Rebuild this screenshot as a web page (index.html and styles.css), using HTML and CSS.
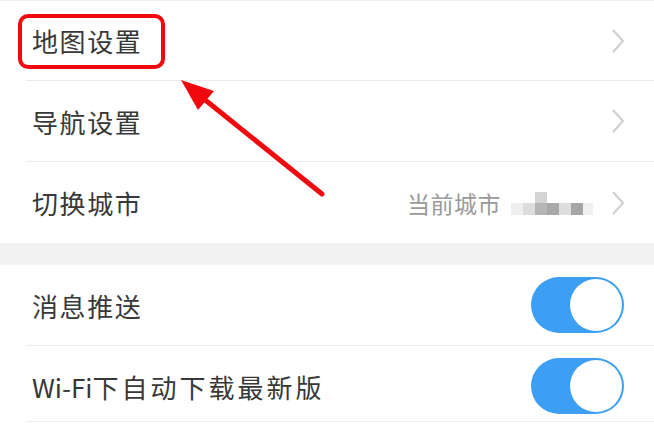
FILE: index.html
```html
<!DOCTYPE html>
<html lang="zh-CN">
<head>
    <meta charset="UTF-8">
    <meta name="viewport" content="width=device-width, initial-scale=1.0">
    <title>设置</title>
    <link rel="stylesheet" href="styles.css">
</head>
<body>
    <div class="page">
        <ul class="group first">
            <li class="row">
                <span class="label">地图设置</span>
                <svg class="chevron" viewBox="0 0 12 24" width="12" height="24"><polyline points="1,1 11,12 1,23"/></svg>
            </li>
            <li class="row">
                <span class="label">导航设置</span>
                <svg class="chevron" viewBox="0 0 12 24" width="12" height="24"><polyline points="1,1 11,12 1,23"/></svg>
            </li>
            <li class="row last">
                <span class="label">切换城市</span>
                <span class="city">当前城市</span>
                <span class="mosaic">
                    <i></i><i></i><i></i><i></i><i></i><i></i><i></i>
                </span>
                <svg class="chevron" viewBox="0 0 12 24" width="12" height="24"><polyline points="1,1 11,12 1,23"/></svg>
            </li>
        </ul>
        <div class="gap"></div>
        <ul class="group">
            <li class="row">
                <span class="label">消息推送</span>
                <span class="switch on"><span class="knob"></span></span>
            </li>
            <li class="row bottom">
                <span class="label wide"><span class="latin">Wi-Fi</span>下自动下载最新版</span>
                <span class="switch on"><span class="knob"></span></span>
            </li>
        </ul>

        <!-- 标注 -->
        <div class="mark"></div>
        <svg class="arrow" width="654" height="425" viewBox="0 0 654 425">
            <line x1="322" y1="194" x2="204" y2="99"/>
            <polygon points="181,80 214,91 198,110"/>
        </svg>
    </div>
</body>
</html>
```

FILE: styles.css
```css
*{
    box-sizing: border-box;
}
body{
    margin: 0;
    background-color: #fff;
    font-family: "Noto Sans CJK SC", "Noto Sans", sans-serif;
    color: #333;
}
.page{
    width: 654px;
    height: 425px;
    position: relative;
    overflow: hidden;
}
.group{
    list-style: none;
    margin: 0;
    padding: 0;
}
.group.first{
    border-top: 1px solid #f0f0f0;
}
.row{
    display: flex;
    align-items: center;
    height: 81px;
    margin-left: 26px;
    padding: 0 30px 0 6px;
    border-bottom: 1px solid #ececec;
}
.group.first .row:first-child{
    height: 80px;
}
.row.last{
    border-bottom: none;
}
.row.bottom{
    height: 76px;
    padding-top: 5px;
}
.label{
    flex: 1;
    font-size: 26px;
    letter-spacing: 1.6px;
    color: #383838;
}
.label.wide{
    letter-spacing: 3px;
}
.label .latin{
    letter-spacing: 0;
}
.chevron{
    display: block;
    margin-left: 19px;
}
.chevron polyline{
    fill: none;
    stroke: #cfcfcf;
    stroke-width: 2;
}
.city{
    font-size: 23px;
    color: #9a9a9a;
    letter-spacing: 0.5px;
}
.mosaic{
    display: flex;
    align-items: flex-end;
    height: 24px;
    margin-left: 10px;
}
.mosaic i{
    display: block;
    width: 12px;
    height: 12px;
    background-color: #eee;
}
.mosaic i:nth-child(2){
    background-color: #dcdcdc;
}
.mosaic i:nth-child(3){
    height: 23px;
    background: linear-gradient(#d4d4d4 50%, #b5b5b5 50%);
}
.mosaic i:nth-child(4){
    background-color: #a9a9a9;
}
.mosaic i:nth-child(5){
    background-color: #dedede;
}
.mosaic i:nth-child(6){
    background-color: #a6a6a6;
}
.mosaic i:nth-child(7){
    width: 10px;
    background-color: #f0f0f0;
}
.gap{
    height: 22px;
    background-color: #f2f2f2;
    border-bottom: 1px solid #f6f6f6;
}
.switch{
    display: flex;
    align-items: center;
    justify-content: flex-end;
    width: 93px;
    height: 56px;
    padding: 2px;
    border-radius: 28px;
    background-color: #3d9ff3;
}
.knob{
    width: 52px;
    height: 52px;
    border-radius: 50%;
    background-color: #fff;
}
.mark{
    position: absolute;
    left: 18px;
    top: 14px;
    width: 147px;
    height: 55px;
    border: 4px solid #f00a10;
    border-radius: 10px;
}
.arrow{
    position: absolute;
    left: 0;
    top: 0;
}
.arrow line{
    stroke: #f00a10;
    stroke-width: 5;
    stroke-linecap: round;
}
.arrow polygon{
    fill: #f00a10;
}
```
